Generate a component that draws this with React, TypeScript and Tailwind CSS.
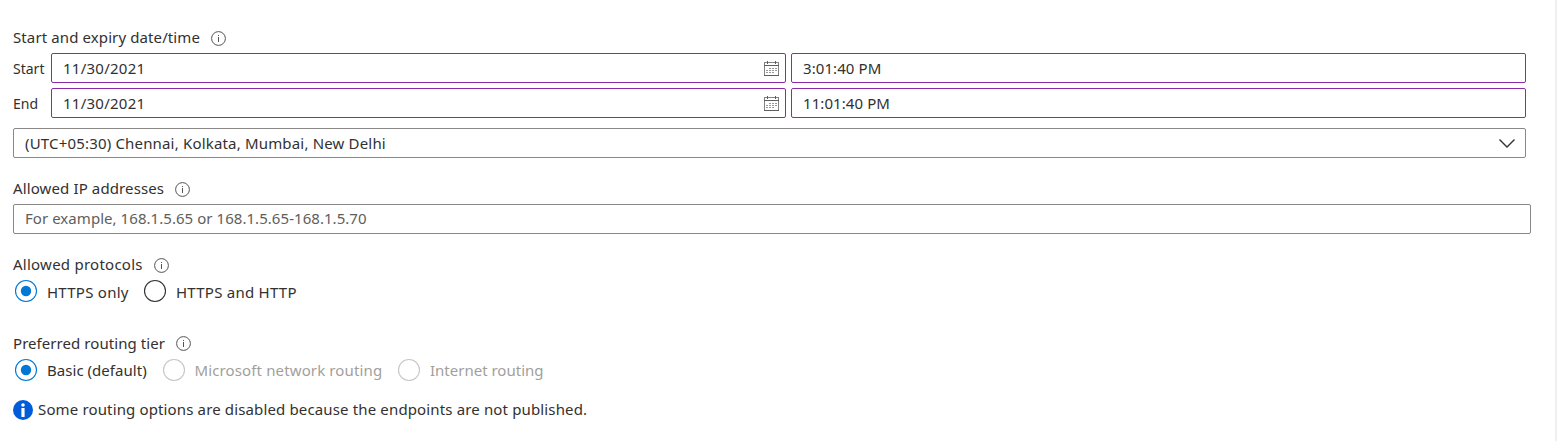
import React from 'react';

const InfoOutline = () => (
  <svg className="h-[15px] w-[15px] shrink-0" viewBox="0 0 15 15" fill="none" stroke="#555352">
    <circle cx="7.5" cy="7.5" r="6.9" strokeWidth="1" />
    <path d="M7.5 6v5M7.5 4v1" strokeWidth="1" />
  </svg>
);

const Calendar = () => (
  <svg className="h-[15px] w-[15px] shrink-0" viewBox="0 0 15 15" fill="none" shapeRendering="crispEdges">
    <path d="M0.5 1.5h14v13H0.5z" stroke="#858381" />
    <path d="M0 4.5h15M3.5 0v3M11.5 0v3M0 14.500h15" stroke="#605e5c" />
    <path d="M5 7.5h8M2 9.5h11M2 11.5h8" strokeDasharray="2 1" stroke="#9a9896" />
  </svg>
);

const Label = ({ children, className }: { children: React.ReactNode; className: string }) => (
  <div className="flex h-5 items-center">
    <span className={className}>{children}</span>
    <InfoOutline />
  </div>
);

const DateRow = ({ label, date, time }: { label: string; date: string; time: string }) => (
  <div className="flex h-[30px] w-[1513px] items-center">
    <span className="w-[38px] shrink-0 pt-[2px] text-[14px]">{label}</span>
    <div className="flex h-[30px] w-[735px] shrink-0 items-center justify-between rounded-[2px] border border-[#8a2da5] pl-[11px] pr-[6px]">
      <span className="tracking-[0.25px]">{date}</span>
      <Calendar />
    </div>
    <div className="ml-[5px] flex h-[30px] w-[735px] shrink-0 items-center rounded-[2px] border border-[#8a2da5] pl-[11px]">
      <span className="tracking-[0.08px]">{time}</span>
    </div>
  </div>
);

const Radio = ({ label, width, text, checked, disabled }: { label: string; width: string; text: string; checked?: boolean; disabled?: boolean }) => (
  <div className={`flex h-6 shrink-0 items-center ${width} ${disabled ? 'text-[#a19f9d]' : ''}`}>
    <svg className="mr-[9px] h-6 w-6 shrink-0" viewBox="0 0 24 24" fill="none">
      <circle cx="12" cy="12" r="10.5" stroke={checked ? '#0078d4' : disabled ? '#c8c6c4' : '#323130'} strokeWidth="1.1" />
      {checked && <circle cx="12" cy="12" r="5.2" fill="#0078d4" />}
    </svg>
    <span className={text}>{label}</span>
  </div>
);

export default function App() {
  return (
    <div className="flex h-[441px] w-[1557px] overflow-hidden whitespace-nowrap bg-white font-['Noto_Sans',sans-serif] text-[15px] leading-5 text-[#323130]">
      <main className="w-[1555px] shrink-0 pl-[13px] pt-[28px]">
        <Label className="w-[198px] pb-[2px] tracking-[0.11px]">Start and expiry date/time</Label>
        <div className="mt-[5px] flex flex-col gap-[5px]">
          <DateRow label="Start" date="11/30/2021" time="3:01:40 PM" />
          <DateRow label="End" date="11/30/2021" time="11:01:40 PM" />
        </div>
        <div className="mt-[10px] flex h-[30px] w-[1513px] items-center justify-between rounded-[2px] border border-[#8a8886] pl-[11px] pr-[10px]">
          <span className="tracking-[0.175px]">(UTC+05:30) Chennai, Kolkata, Mumbai, New Delhi</span>
          <svg className="h-[10px] w-4" viewBox="0 0 16 10" fill="none" stroke="#323130" strokeWidth="1.4">
            <path d="M0.5 1.500l7.5 7.5L15.500 1.500" />
          </svg>
        </div>
        <div className="mt-[21px]">
          <Label className="w-[162px] pb-[2px] tracking-[0.12px]">Allowed IP addresses</Label>
        </div>
        <div className="mt-[5px] flex h-[30px] w-[1518px] items-center rounded-[2px] border border-[#8a8886] pl-[11px] text-[#605e5c]">
          <span className="pb-[2px] tracking-[0.05px]">For example, 168.1.5.65 or 168.1.5.65-168.1.5.70</span>
        </div>
        <div className="mt-[21px]">
          <Label className="w-[141px] pb-[2px] tracking-[0.25px]">Allowed protocols</Label>
        </div>
        <div className="mt-[4px] flex pl-[1px]">
          <Radio label="HTTPS only" width="w-[129px]" text="pt-[2px] tracking-[0.25px]" checked />
          <Radio label="HTTPS and HTTP" width="w-[160px]" text="pt-[2px] tracking-[0.25px]" />
        </div>
        <div className="mt-[30px]">
          <Label className="w-[163px] tracking-[0.06px]">Preferred routing tier</Label>
        </div>
        <div className="mt-[5px] flex pl-[1px]">
          <Radio label="Basic (default)" width="w-[147.5px]" text="tracking-[0.04px]" checked />
          <Radio label="Microsoft network routing" width="w-[235.500px]" text="tracking-[0.13px]" disabled />
          <Radio label="Internet routing" width="w-[160px]" text="tracking-normal" disabled />
        </div>
        <div className="mt-[18px] flex h-5 items-center">
          <svg className="mr-[5px] h-5 w-5 shrink-0" viewBox="0 0 20 20">
            <circle cx="10" cy="10" r="10" fill="#015cda" />
            <circle cx="10" cy="5" r="1.8" fill="#fff" />
            <rect x="8.400" y="8" width="3.200" height="9" rx="0.500" fill="#fff" />
          </svg>
          <span className="pb-[2px] tracking-[0.142px]">Some routing options are disabled because the endpoints are not published.</span>
        </div>
      </main>
      <div className="w-[2px] shrink-0 bg-[#f0f0f0]" />
    </div>
  );
}
